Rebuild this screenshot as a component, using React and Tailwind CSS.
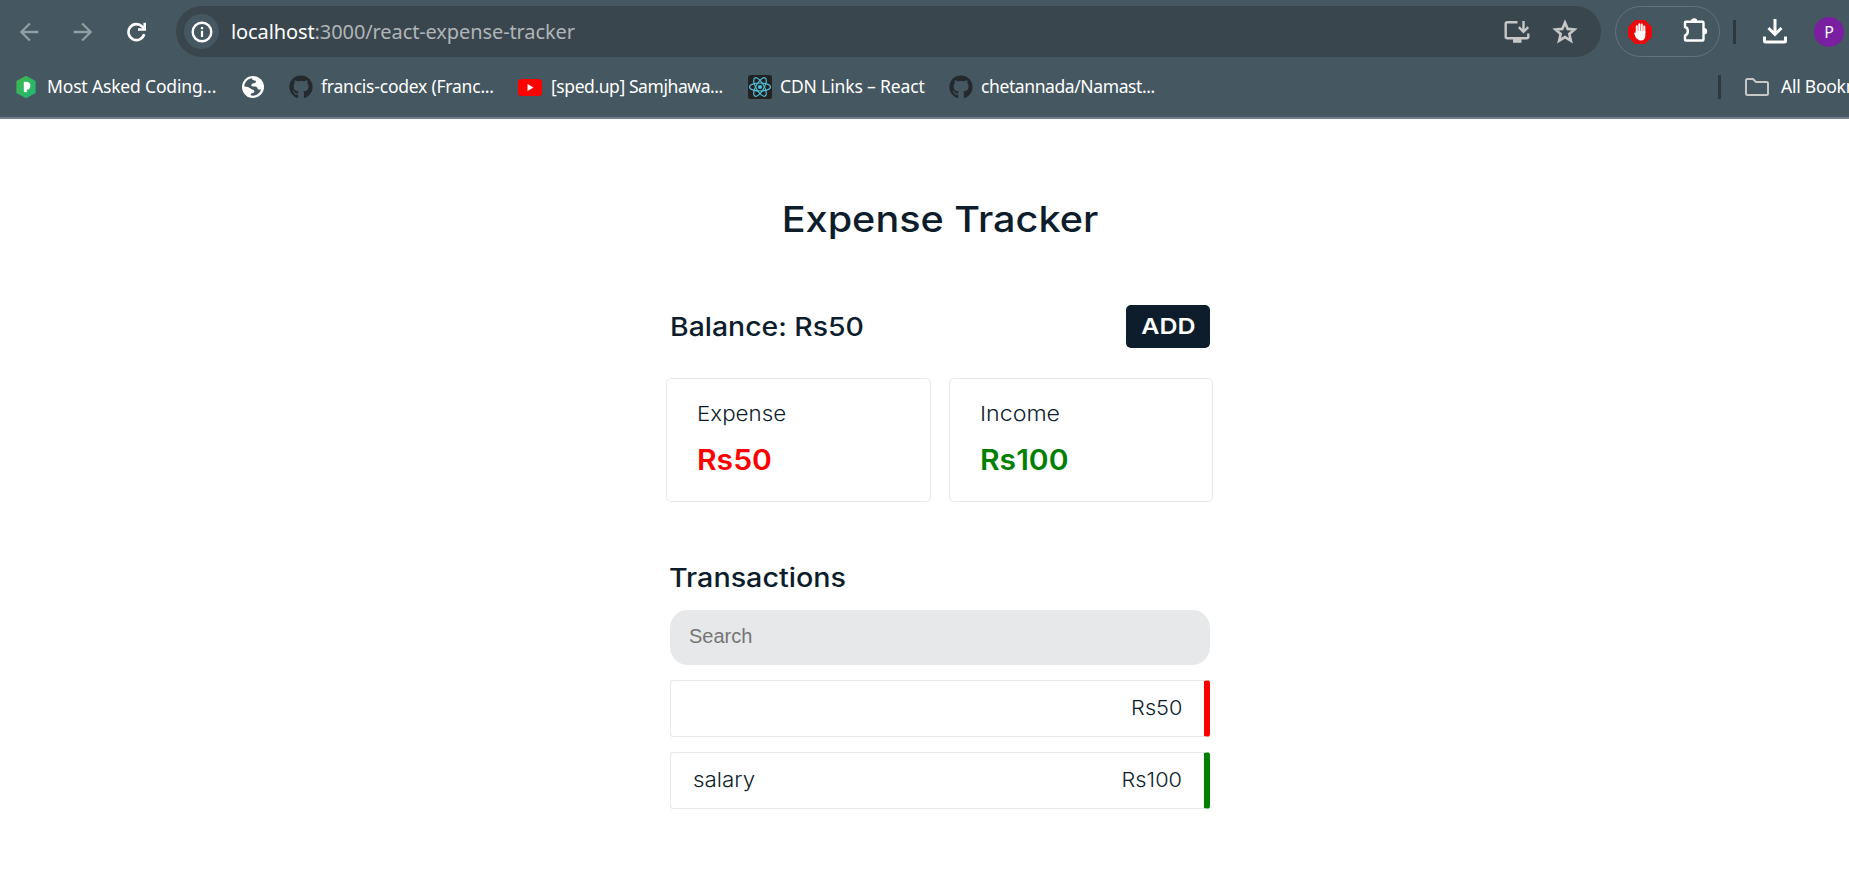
import { FaGithub } from "react-icons/fa";
import { MdArrowBack, MdArrowForward } from "react-icons/md";

const UI = "font-['Noto_Sans',sans-serif]";

function Reload() {
  return (
    <svg width="20" height="20" viewBox="0 0 20 20" fill="none" stroke="#fff" strokeWidth="2.600">
      <path d="M17.200 12.200A8 8 0 1 1 15.300 4.600L17.500 6.800" />
      <path d="M17.700 .8V7.500H11" />
    </svg>
  );
}

function Info() {
  return (
    <svg width="22" height="22" viewBox="0 0 22 22" fill="none" stroke="#fff">
      <circle cx="11" cy="11" r="9.300" strokeWidth="2.400" />
      <path d="M11 9.800v6.200M11 6v2.300" strokeWidth="2.200" />
    </svg>
  );
}

function Install() {
  return (
    <svg width="26" height="24" viewBox="0 0 26 24" fill="none" stroke="#c7c7c7" strokeWidth="2.400">
      <path d="M13.500 2.200H3.200q-1.500 0-1.500 1.500v13q0 1.500 1.500 1.500h19.600q1.500 0 1.500-1.500V13.500" />
      <path d="M19.500 1v10.500M14.800 7.200l4.700 4.700 4.700-4.700" />
      <path d="M9 18h8.500v4.800H9z" fill="#c7c7c7" stroke="none" />
    </svg>
  );
}

function Star() {
  return (
    <svg width="26" height="25" viewBox="0 0 26 25" fill="none" stroke="#c7c7c7" strokeWidth="2.600">
      <path d="M13 3.600 15.700 9.900 22.500 10.500 17.300 15 18.900 21.700 13 18.100 7.100 21.700 8.700 15 3.500 10.500 10.300 9.900z" />
    </svg>
  );
}

function Puzzle() {
  return (
    <svg width="25" height="25" viewBox="0 0 25 25">
      <path
        d="M2 4.500Q2 3.800 2.800 3.800H19.500Q20.500 3.800 20.500 4.800V21.500Q20.500 22.500 19.500 22.500H2.800Q2 22.500 2 21.700V17.500C5.800 16.500 5.800 10 2 9z"
        fill="none"
        stroke="#fff"
        strokeWidth="2.400"
        strokeLinejoin="round"
      />
      <path d="M8 3.500a3.200 3.200 0 0 1 6.400 0zM21 10a3.200 3.200 0 0 1 0 6.400z" fill="#fff" />
    </svg>
  );
}

function Globe() {
  return (
    <svg width="22" height="22" viewBox="0 0 22 22">
      <circle cx="11" cy="11" r="11" fill="#fff" />
      <path
        d="M2.300 10.200C2.600 6 6 2.600 10.200 2.300c-.3 1.500.7 2.200 2.400 2.200 1.800 0 1.700 1.900.4 2.500-1.400.6-3.500.2-3.700 1.900-.2 1.600 1.500 1.600 3.500 1.700 2.200.1 3 1.300 3 2.900h3.300c-1.100 3.600-4.300 6.100-8.100 6.200-.9-.1-1.700-.2-2.400-.4.1-1.600 1-2.300 2.600-2.500 1.500-.2 1.500-2.600-.2-3.100-2.700-.8-3.400-2.300-5.200-2.700-1.100-.3-2.300-.3-3.500-.8z"
        fill="#455760"
      />
    </svg>
  );
}

function Hexagon() {
  return (
    <svg width="20" height="24" viewBox="0 0 20 24">
      <defs>
        <linearGradient id="hex" x1="0" y1="0" x2="1" y2="1">
          <stop offset="0" stopColor="#43b649" />
          <stop offset="1" stopColor="#1db979" />
        </linearGradient>
      </defs>
      <path d="M10 .8 19.6 6v12L10 23.2.4 18V6z" fill="url(#hex)" />
      <path d="M7.8 6.8h2.4c2.700 0 4.200 1.600 4.200 4s-1.600 4-3.600 4v2.400H9.200c-.9 0-1.400-.5-1.400-1.400z" fill="#fff" />
    </svg>
  );
}

function Youtube() {
  return (
    <svg width="24" height="17" viewBox="0 0 24 17">
      <rect width="24" height="17" rx="3.500" fill="#f00" />
      <path d="M9.500 5v7l6-3.500z" fill="#fff" />
    </svg>
  );
}

function ReactLogo() {
  return (
    <svg width="24" height="24" viewBox="0 0 24 24">
      <rect width="24" height="24" rx="2.500" fill="#222" />
      <g fill="none" stroke="#53c1de" strokeWidth="1.200">
        <ellipse cx="12" cy="12" rx="10.500" ry="4" />
        <ellipse cx="12" cy="12" rx="10.500" ry="4" transform="rotate(60 12 12)" />
        <ellipse cx="12" cy="12" rx="10.500" ry="4" transform="rotate(120 12 12)" />
      </g>
      <circle cx="12" cy="12" r="2.100" fill="#53c1de" />
    </svg>
  );
}

function Hand() {
  return (
    <svg width="24" height="24" viewBox="0 0 24 24">
      <path d="M7 0h10l7 7v10l-7 7H7l-7-7V7z" fill="#e80b0b" />
      <g stroke="#fff" strokeWidth="2" strokeLinecap="round" fill="none">
        <path d="M8.800 13V6.200M11.300 12V4.300M13.800 12V4.500M16.300 13V6.500" />
        <path d="M7.300 13.500 9 17.500" />
      </g>
      <path d="M7.800 11h9.500v4.500c0 3-1.700 5-4.300 5-2.400 0-3.700-1.300-4.500-3.200l-2-4c.7-.6 1.300-.3 1.800.5z" fill="#fff" />
    </svg>
  );
}

function Download() {
  return (
    <svg width="24" height="25" viewBox="0 0 24 25" fill="none" stroke="#fff" strokeWidth="3">
      <path d="M12 0v15M5.500 9 12 15.500 18.500 9M1.500 17.500v4.500q0 1 1 1h19q1 0 1-1v-4.500" />
    </svg>
  );
}

function Folder() {
  return (
    <svg width="24" height="18" viewBox="0 0 24 18" fill="none" stroke="#c7c7c7" strokeWidth="2">
      <path d="M1 2.500Q1 1 2.500 1H8l3 3h10.500Q23 4 23 5.500v10q0 1.500-1.500 1.500h-19Q1 17 1 15.500z" />
    </svg>
  );
}

function Bookmark({ icon, label, className }) {
  return (
    <div className={`flex shrink-0 items-center ${className}`}>
      {icon}
      {label && <span className="pb-px whitespace-nowrap">{label}</span>}
    </div>
  );
}

function Card({ label, labelScale, value, color }) {
  return (
    <div className="h-[124px] w-[264.500px] rounded-[5px] border border-[#e6e8e9] pt-[21px] pl-[30px]">
      <div className={`origin-left text-[20.500px] leading-[28px] font-light ${labelScale}`}>{label}</div>
      <div className={`mt-[12px] origin-left scale-x-[1.055] text-[28.500px] leading-[40px] font-semibold ${color}`}>{value}</div>
    </div>
  );
}

function Row({ label, value, edge }) {
  return (
    <div className={`flex h-[57px] items-center justify-between rounded-[3px] border border-r-[6px] border-[#e6e8e9] pr-[22px] pl-[22px] text-[20.500px] font-light ${edge}`}>
      <span className="origin-left scale-x-[1.090]">{label}</span>
      <span className="origin-right scale-x-[1.060]">{value}</span>
    </div>
  );
}

export default function App() {
  return (
    <div className="h-[892px] w-[1849px] overflow-hidden bg-white">
      <header className={`h-[119px] overflow-hidden border-b-2 border-[#73818a] bg-[#455760] text-white ${UI}`}>
        <div className="flex h-[63px] items-center">
          <MdArrowBack className="ml-[15px] size-[28px] shrink-0 text-[#929da2]" />
          <MdArrowForward className="ml-[26px] size-[28px] shrink-0 text-[#929da2]" />
          <div className="ml-[30px] shrink-0"><Reload /></div>
          <div className="ml-[29px] flex h-[51px] w-[1425px] shrink-0 items-center rounded-full bg-[#3a464d]">
            <div className="ml-[8px] flex size-[35px] items-center justify-center rounded-full bg-[#455760]">
              <Info />
            </div>
            <span className="ml-[12px] text-[20px] tracking-[-0.100px] whitespace-nowrap">
              localhost<span className="text-[#b0b5b8]">:3000/react-expense-tracker</span>
            </span>
            <div className="mr-[22px] ml-auto"><Install /></div>
            <div className="mr-[23px]"><Star /></div>
          </div>
          <div className="ml-[14px] flex h-[51px] w-[105px] shrink-0 items-center rounded-full border border-[#65747c] pl-[12px]">
            <Hand />
            <div className="mb-[3px] ml-[31px]"><Puzzle /></div>
          </div>
          <div className="ml-[13px] h-[24px] w-[3px] shrink-0 bg-[#2e383d]" />
          <div className="ml-[27px] shrink-0"><Download /></div>
          <div className="ml-[27px] flex size-[30px] shrink-0 items-center justify-center rounded-full bg-[#7b1fa2] text-[16px]">P</div>
        </div>
        <div className="flex h-[48px] items-center text-[17.500px]">
          <Bookmark className="ml-[16px] w-[226px] gap-[11px] tracking-[-0.160px]" icon={<Hexagon />} label="Most Asked Coding..." />
          <Bookmark className="w-[47px]" icon={<Globe />} />
          <Bookmark className="w-[229px] gap-[8px] tracking-[-0.220px]" icon={<FaGithub className="size-[24px] text-[#24292e]" />} label="francis-codex (Franc..." />
          <Bookmark className="w-[230px] gap-[9px] tracking-[-0.420px]" icon={<Youtube />} label="[sped.up] Samjhawa..." />
          <Bookmark className="w-[201px] gap-[8px] tracking-[-0.140px]" icon={<ReactLogo />} label="CDN Links – React" />
          <Bookmark className="gap-[8px] tracking-[-0.400px]" icon={<FaGithub className="size-[24px] text-[#24292e]" />} label="chetannada/Namast..." />
          <div className="ml-auto flex w-[131px] shrink-0 items-center">
            <div className="h-[24px] w-[3px] shrink-0 bg-[#2e383d]" />
            <div className="ml-[24px] shrink-0"><Folder /></div>
            <span className="ml-[12px] pb-px tracking-[-0.250px] whitespace-nowrap">All Bookmarks</span>
          </div>
        </div>
      </header>
      <main className="ml-[666px] flex w-[548px] flex-col font-[Inter,sans-serif] text-[#0d1d2c]">
        <h1 className="mt-[75px] scale-x-[1.100] text-center text-[36px] leading-[50px] font-medium">Expense Tracker</h1>
        <div className="mt-[61px] flex h-[43px] items-center justify-between px-[4px]">
          <div className="origin-left scale-x-[1.092] text-[26px] font-medium">Balance: Rs50</div>
          <button className="h-[43px] w-[84px] rounded-[5px] bg-[#0d1d2c] text-[21.500px] font-semibold text-white">
            <span className="inline-block scale-x-[1.160]">ADD</span>
          </button>
        </div>
        <div className="mt-[30px] flex gap-[18px]">
          <Card label="Expense" labelScale="scale-x-[1.090]" value="Rs50" color="text-[#ff0000]" />
          <Card label="Income" labelScale="scale-x-[1.130]" value="Rs100" color="text-[#008000]" />
        </div>
        <section className="mx-[4px] flex flex-col">
          <h2 className="mt-[58px] -ml-px origin-left scale-x-[1.104] text-[26px] leading-[36px] font-medium">Transactions</h2>
          <input placeholder="Search" className="mt-[14px] mb-[15px] h-[55px] rounded-[18px] bg-[#e6e8e9] px-[19px] pb-[2px] font-['Liberation_Sans',sans-serif] text-[20px] placeholder:text-[#757575]" />
          <Row label="" value="Rs50" edge="border-r-[#ff0000]" />
          <div className="h-[15px]" />
          <Row label="salary" value="Rs100" edge="border-r-[#008000]" />
        </section>
      </main>
    </div>
  );
}
